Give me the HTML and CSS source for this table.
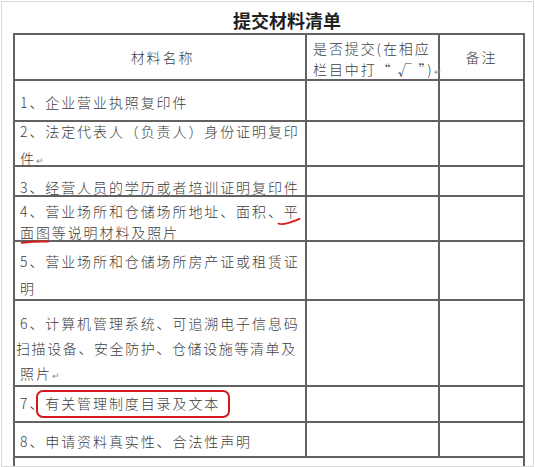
FILE: index.html
```html
<!DOCTYPE html>
<html lang="zh-CN">
<head>
<meta charset="utf-8">
<title>提交材料清单</title>
<link rel="stylesheet" href="styles.css">
</head>
<body>
<div class="frame">
  <h1 class="title">提交材料清单</h1>
  <table class="sheet">
    <tr class="row-head">
      <td class="c1 center"><div class="t">材料名称</div></td>
      <td class="c2"><div class="t t-q">是否提交(在相应<br>栏目中打“ √ ”)<span class="pm">↵</span></div></td>
      <td class="c3 center"><div class="t">备注</div></td>
    </tr>
    <tr class="row-1">
      <td class="c1"><div class="t">1、企业营业执照复印件</div></td><td></td><td></td>
    </tr>
    <tr class="row-2">
      <td class="c1"><div class="t">2、法定代表人（负责人）身份证明复印<br>件<span class="pm">↵</span></div></td><td></td><td></td>
    </tr>
    <tr class="row-3">
      <td class="c1"><div class="t">3、经营人员的学历或者培训证明复印件</div></td><td></td><td></td>
    </tr>
    <tr class="row-4">
      <td class="c1"><div class="t">4、营业场所和仓储场所地址、面积、<span class="mark">平<svg class="ul-ping" width="24" height="9" viewBox="0 0 24 9"><path d="M1.5 6.5 C4 8.2 9 7.6 22.5 1.8" fill="none" stroke="#d81c1c" stroke-width="1.8" stroke-linecap="round"/></svg></span><br><span class="mark">面图<svg class="ul-mian" width="30" height="6" viewBox="0 0 30 6"><path d="M2 3.8 C9 3 19 2.2 28 2.6" fill="none" stroke="#d81c1c" stroke-width="2" stroke-linecap="round"/></svg></span>等说明材料及照片</div></td><td></td><td></td>
    </tr>
    <tr class="row-5">
      <td class="c1"><div class="t">5、营业场所和仓储场所房产证或租赁证<br>明</div></td><td></td><td></td>
    </tr>
    <tr class="row-6">
      <td class="c1"><div class="t">6、计算机管理系统、可追溯电子信息码<br><span class="tight">扫描设备、安全防护、仓储设施等清单及</span><br>照片<span class="pm">↵</span></div></td><td></td><td></td>
    </tr>
    <tr class="row-7">
      <td class="c1"><div class="t">7、<span class="boxed">有关管理制度目录及文本</span></div></td><td></td><td></td>
    </tr>
    <tr class="row-8">
      <td class="c1"><div class="t">8、申请资料真实性、合法性声明</div></td><td></td><td></td>
    </tr>
    <tr class="row-9">
      <td colspan="3"></td>
    </tr>
  </table>
</div>
</body>
</html>
```

FILE: styles.css
```css
* { box-sizing: border-box; }

body {
  margin: 0;
  background: #fff;
  font-family: "Noto Sans CJK SC", "Noto Sans", sans-serif;
}

.frame {
  margin: 1px 0 0 1px;
  width: 533px;
  height: 466px;
  border: 1px solid #d9d9d9;
  overflow: hidden;
  background: #fff;
}

.title {
  margin: 0;
  height: 31px;
  padding: 7px 0 2px 231px;
  font-size: 18px;
  line-height: 22px;
  font-weight: 700;
  color: #1f1f1f;
}

.sheet {
  margin-left: 11px;
  width: 512px;
  table-layout: fixed;
  border-collapse: separate;
  border-spacing: 0;
  border-top: 2px solid #626262;
  border-left: 2px solid #626262;
  color: #3d3d3d;
  font-size: 14px;
  font-weight: 300;
  letter-spacing: 1.9px;
}

.sheet td {
  border-right: 2px solid #626262;
  border-bottom: 2px solid #626262;
  padding: 0 0 0 5px;
  vertical-align: top;
  white-space: nowrap;
}

.sheet .c1 { width: 292px; }
.sheet .c2 { width: 133px; padding-left: 6px; }
.sheet .c3 { width: 85px; padding-left: 0; }
.sheet .center { text-align: center; }

.t {
  height: 0;
  line-height: 20px;
}

.pm {
  font-size: 9px;
  color: #8a8a8a;
  letter-spacing: 0;
}

.tight {
  letter-spacing: 1.6px;
  margin-left: -4px;
}

/* row heights (include bottom rule) and text offsets */
.row-head td { height: 46px; }
.row-head .t { margin-top: 12px; }
.row-head .t-q { margin-top: 3px; line-height: 21px; }

.row-1 td { height: 41px; }
.row-1 .t { margin-top: 11px; }

.row-2 td { height: 45px; }
.row-2 .t { margin-top: -4px; line-height: 26.5px; }

.row-3 td { height: 30px; }
.row-3 .t { margin-top: 10px; }

.row-4 td { height: 45px; }
.row-4 .t { margin-top: 4px; line-height: 20.5px; }

.row-5 td { height: 59px; }
.row-5 .t { margin-top: 6px; line-height: 26.5px; }

.row-6 td { height: 86px; }
.row-6 .t { margin-top: 10px; line-height: 25px; }

.row-7 td { height: 36px; }
.row-7 .t { margin-top: 6px; }

.row-8 td { height: 35px; }
.row-8 .t { margin-top: 8px; }

.row-9 td { height: 30px; border-bottom: 0; }

/* annotations drawn over the text */
.mark { position: relative; }
.mark svg { position: absolute; }
.ul-ping { left: -7px; top: 16px; }
.ul-mian { left: 0; top: 17px; }

.boxed { position: relative; }
.boxed::after {
  content: "";
  position: absolute;
  left: -9px;
  right: -10px;
  top: -3px;
  bottom: -5px;
  border: 2px solid #d3191f;
  border-radius: 7px;
}
```
